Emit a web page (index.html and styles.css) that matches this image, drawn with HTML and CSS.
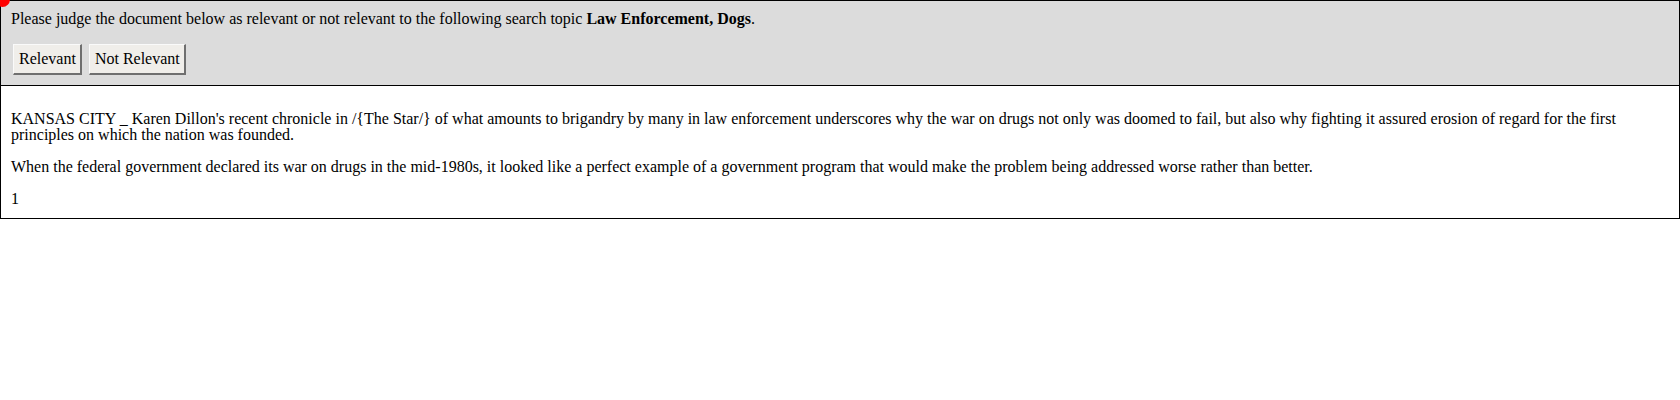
FILE: index.html
```html
<!DOCTYPE html>
<html>
<head>
<meta charset="utf-8">
<link rel="stylesheet" href="styles.css">
</head>
<body>
<div class="marker"></div>
<div class="frame">
  <div class="header">
    <p class="prompt">Please judge the document below as relevant or not relevant to the following search topic <b>Law Enforcement, Dogs</b>.</p>
    <div class="actions">
      <button class="judge">Relevant</button>
      <button class="judge">Not Relevant</button>
    </div>
  </div>
  <div class="doc">
    <p>KANSAS CITY _ Karen Dillon's recent chronicle in /{The Star/} of what amounts to brigandry by many in law enforcement underscores why the war on drugs not only was doomed to fail, but also why fighting it assured erosion of regard for the first principles on which the nation was founded.</p>
    <p>When the federal government declared its war on drugs in the mid-1980s, it looked like a perfect example of a government program that would make the problem being addressed worse rather than better.</p>
    <div class="page">1</div>
  </div>
</div>
</body>
</html>
```
FILE: styles.css
```css
html, body {
  margin: 0;
  padding: 0;
  background: #ffffff;
}
body {
  font-family: "Liberation Serif", "Times New Roman", serif;
  font-size: 16px;
  color: #000;
  position: relative;
}
.marker {
  position: absolute;
  left: -5px;
  top: -8px;
  width: 15px;
  height: 15px;
  border-radius: 50%;
  background: #ff0000;
  z-index: 2;
}
.frame {
  width: 1678px;
  border: 1px solid #000;
}
.header {
  background: #dcdcdc;
  border-bottom: 1px solid #000;
  padding: 9px 10px 10px 10px;
}
.prompt {
  margin: 0;
  line-height: 18px;
}
.actions {
  display: flex;
  gap: 7px;
  margin-top: 16px;
  padding-left: 2px;
}
.judge {
  font-family: "Liberation Serif", "Times New Roman", serif;
  font-size: 16px;
  color: #000;
  background: #f0eeea;
  border-style: solid;
  border-width: 1px 2px 2px 1px;
  border-color: #fafafa #6f6f6f #6f6f6f #fafafa;
  padding: 5px 4px 5px 5px;
  height: 31px;
  line-height: 18px;
  margin: 0;
}
.doc {
  padding: 17px 10px 11px 10px;
  line-height: 16px;
}
.doc p {
  margin: 8px 0 16px 0;
}
.page {
  margin: 0;
}
```
